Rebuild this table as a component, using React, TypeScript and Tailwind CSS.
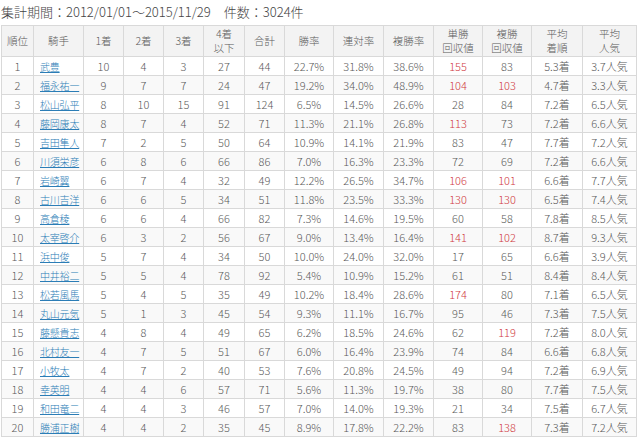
import React from 'react';

type Row = [number, string, number, number, number, number, number, string, string, string, number, number, string, string];

const rows: Row[] = [
  [1, '武豊', 10, 4, 3, 27, 44, '22.7%', '31.8%', '38.6%', 155, 83, '5.3着', '3.7人気'],
  [2, '福永祐一', 9, 7, 7, 24, 47, '19.2%', '34.0%', '48.9%', 104, 103, '4.7着', '3.3人気'],
  [3, '松山弘平', 8, 10, 15, 91, 124, '6.5%', '14.5%', '26.6%', 28, 84, '7.2着', '6.5人気'],
  [4, '藤岡康太', 8, 7, 4, 52, 71, '11.3%', '21.1%', '26.8%', 113, 73, '7.2着', '6.6人気'],
  [5, '吉田隼人', 7, 2, 5, 50, 64, '10.9%', '14.1%', '21.9%', 83, 47, '7.7着', '7.2人気'],
  [6, '川須栄彦', 6, 8, 6, 66, 86, '7.0%', '16.3%', '23.3%', 72, 69, '7.2着', '6.6人気'],
  [7, '岩崎翼', 6, 7, 4, 32, 49, '12.2%', '26.5%', '34.7%', 106, 101, '6.6着', '7.7人気'],
  [8, '古川吉洋', 6, 6, 5, 34, 51, '11.8%', '23.5%', '33.3%', 130, 130, '6.5着', '7.4人気'],
  [9, '高倉稜', 6, 6, 4, 66, 82, '7.3%', '14.6%', '19.5%', 60, 58, '7.8着', '8.5人気'],
  [10, '太宰啓介', 6, 3, 2, 56, 67, '9.0%', '13.4%', '16.4%', 141, 102, '8.7着', '9.3人気'],
  [11, '浜中俊', 5, 7, 4, 34, 50, '10.0%', '24.0%', '32.0%', 17, 65, '6.6着', '3.9人気'],
  [12, '中井裕二', 5, 5, 4, 78, 92, '5.4%', '10.9%', '15.2%', 61, 51, '8.4着', '8.4人気'],
  [13, '松若風馬', 5, 4, 5, 35, 49, '10.2%', '18.4%', '28.6%', 174, 80, '7.1着', '6.5人気'],
  [14, '丸山元気', 5, 1, 3, 45, 54, '9.3%', '11.1%', '16.7%', 95, 46, '7.3着', '7.5人気'],
  [15, '藤懸貴志', 4, 8, 4, 49, 65, '6.2%', '18.5%', '24.6%', 62, 119, '7.2着', '8.0人気'],
  [16, '北村友一', 4, 7, 5, 51, 67, '6.0%', '16.4%', '23.9%', 74, 84, '6.6着', '6.8人気'],
  [17, '小牧太', 4, 7, 2, 40, 53, '7.6%', '20.8%', '24.5%', 49, 94, '7.2着', '6.9人気'],
  [18, '幸英明', 4, 4, 6, 57, 71, '5.6%', '11.3%', '19.7%', 38, 80, '7.7着', '7.5人気'],
  [19, '和田竜二', 4, 4, 3, 46, 57, '7.0%', '14.0%', '19.3%', 21, 34, '7.5着', '6.7人気'],
  [20, '勝浦正樹', 4, 4, 2, 35, 45, '8.9%', '17.8%', '22.2%', 83, 138, '7.3着', '7.2人気'],
];

const headers: React.ReactNode[] = [
  '順位', '騎手', '1着', '2着', '3着',
  <>4着<br />以下</>,
  '合計', '勝率', '連対率', '複勝率',
  <>単勝<br />回収値</>,
  <>複勝<br />回収値</>,
  <>平均<br />着順</>,
  <>平均<br />人気</>,
];

const cols = [
  'w-[32px]', 'w-[50px]', 'w-[40px]', 'w-[40px]', 'w-[40px]', 'w-[41px]', 'w-[40px]',
  'w-[49px]', 'w-[50px]', 'w-[50px]', 'w-[49px]', 'w-[49px]', 'w-[51px]', 'w-[54px]',
];

const cell = 'border border-[#d9d9d9] text-center p-0 whitespace-nowrap overflow-hidden';

export default function App() {
  return (
    <div
      className="bg-white text-[#5a5a5a] w-[640px] h-[441px] overflow-hidden"
      style={{ fontFamily: '"Noto Sans CJK JP", "Liberation Sans", sans-serif' }}
    >
      <div className="h-[25px] pl-px pt-[3px] text-[13px] leading-[18px] text-[#444] font-light">
        集計期間：2012/01/01〜2015/11/29　件数：3024件
      </div>
      <table className="ml-px table-fixed border-collapse w-[636px] font-light">
        <colgroup>
          {cols.map((c, i) => (
            <col key={i} className={c} />
          ))}
        </colgroup>
        <thead>
          <tr className="h-[31px] bg-[#f3f3f3]">
            {headers.map((h, i) => (
              <th key={i} className={`${cell} font-light text-[10.5px] leading-[14px]`}>
                {h}
              </th>
            ))}
          </tr>
        </thead>
        <tbody>
          {rows.map((r, ri) => (
            <tr key={ri} className={`h-[19px] text-[11px] leading-[17px] ${ri % 2 === 1 ? 'bg-[#f9f9f9]' : 'bg-white'}`}>
              {r.map((v, ci) => {
                if (ci === 1) {
                  return (
                    <td key={ci} className={`${cell} text-left pl-[6px]`}>
                      <a className="text-[#2b7db6] underline text-[10px] tracking-[-0.2px]">{v}</a>
                    </td>
                  );
                }
                const red = (ci === 10 || ci === 11) && (v as number) >= 100;
                return (
                  <td key={ci} className={`${cell} ${red ? 'text-[#d0393f]' : ''}`}>
                    {v}
                  </td>
                );
              })}
            </tr>
          ))}
        </tbody>
      </table>
    </div>
  );
}
